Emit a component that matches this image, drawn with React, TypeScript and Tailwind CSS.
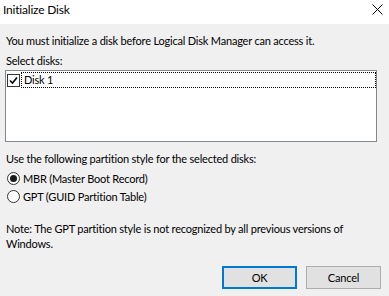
import { useState } from 'react'

function CheckBox({ checked }: { checked: boolean }) {
  return (
    <span className="flex h-[13px] w-[13px] shrink-0 items-center justify-center border border-[#333] bg-white">
      {checked && (
        <svg width="9" height="9" viewBox="0 0 9 9">
          <path d="M1 4.5 L3.5 7 L8 1.5" fill="none" stroke="#000" strokeWidth="1.6" />
        </svg>
      )}
    </span>
  )
}

function Radio({ checked, label, onClick }: { checked: boolean; label: string; onClick: () => void }) {
  return (
    <button onClick={onClick} className="flex h-[18px] items-center gap-[3px] pl-[1px] text-left">
      <span className="flex h-[13px] w-[13px] items-center justify-center rounded-full border border-[#333] bg-white">
        {checked && <span className="h-[7px] w-[7px] rounded-full bg-[#1a1a1a]" />}
      </span>
      <span>{label}</span>
    </button>
  )
}

export default function App() {
  const [style, setStyle] = useState<'mbr' | 'gpt'>('mbr')
  const [checked, setChecked] = useState(true)

  return (
    <div className="flex h-[296px] w-[389px] flex-col bg-[#f0f0f0] font-['Lato','Liberation_Sans',sans-serif] text-[11px] leading-[15px] tracking-[-0.2px] text-black">
      <div className="flex h-[24px] items-start justify-between bg-white pl-[3px] pt-[2px]">
        <span className="text-[12px]">Initialize Disk</span>
        <svg width="11" height="11" viewBox="0 0 11 11" className="mr-[6px] mt-[2px]">
          <path d="M0.5 0.5 L10.5 10.5 M10.5 0.5 L0.5 10.5" stroke="#000" strokeWidth="1" />
        </svg>
      </div>

      <div className="flex flex-col px-[6px] pt-[9px]">
        <p>You must initialize a disk before Logical Disk Manager can access it.</p>
        <p className="mt-[5px]">Select disks:</p>

        <div className="ml-[-1px] mt-[2px] h-[72px] w-[372px] border border-[#828790] bg-white pt-[1px]">
          <button
            onClick={() => setChecked(!checked)}
            className="flex w-full items-center gap-[1px] pl-[1px] text-left"
          >
            <CheckBox checked={checked} />
            <span className="h-[16px] flex-1 border border-dotted border-black pl-[2px] leading-[14px]">Disk 1</span>
          </button>
        </div>

        <p className="mt-[9px]">Use the following partition style for the selected disks:</p>
        <div className="mt-[3px] flex flex-col">
          <Radio checked={style === 'mbr'} label="MBR (Master Boot Record)" onClick={() => setStyle('mbr')} />
          <Radio checked={style === 'gpt'} label="GPT (GUID Partition Table)" onClick={() => setStyle('gpt')} />
        </div>

        <p className="mt-[16px] w-[360px]">
          Note: The GPT partition style is not recognized by all previous versions of Windows.
        </p>

        <div className="mt-[15px] flex justify-end gap-[9px] pr-[2px]">
          <button className="h-[23px] w-[75px] border-2 border-[#0078d7] bg-[#e1e1e1]">OK</button>
          <button className="h-[23px] w-[75px] border border-[#adadad] bg-[#e1e1e1]">Cancel</button>
        </div>
      </div>
    </div>
  )
}
